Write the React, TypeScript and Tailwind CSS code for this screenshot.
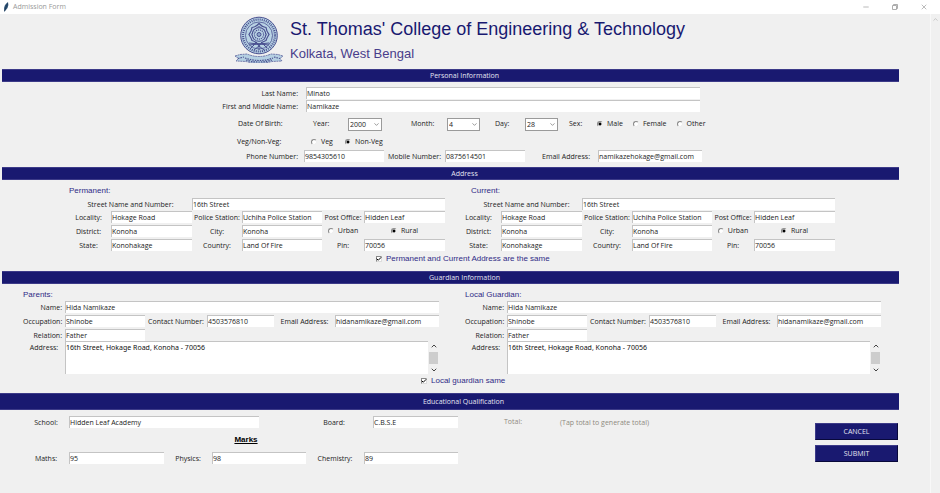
import { useId } from "react";
import type { ReactNode } from "react";
import { Check, ChevronDown, ChevronUp, Minus, X } from "lucide-react";

const FONT = "font-['Open_Sans','Noto_Sans',sans-serif]";
const ARIAL = "font-['Liberation_Sans',Arial,sans-serif]";

type FieldProps = {
  label: string;
  value: string;
  labelClass?: string;
  inputClass?: string;
};

function Field({ label, value, labelClass = "text-center", inputClass = "" }: FieldProps) {
  const id = useId();
  return (
    <>
      <label htmlFor={id} className={`h-3 min-w-0 leading-[14px] whitespace-nowrap ${labelClass}`}>
        {label}
      </label>
      <input
        id={id}
        defaultValue={value}
        className={`h-3 w-full min-w-0 border-t border-l border-[#c4c4c4] bg-white leading-3 outline-none ${inputClass}`}
      />
    </>
  );
}

function Picker({ label, value, options, labelClass }: { label: string; value: string; options: string[]; labelClass: string }) {
  const id = useId();
  return (
    <>
      <label htmlFor={id} className={labelClass}>
        {label}
      </label>
      <div className="relative">
        <select
          id={id}
          defaultValue={value}
          className="block h-[13px] w-full appearance-none border border-[#9a9a9a] bg-white pl-px leading-3 outline-none"
        >
          {options.map((o) => (
            <option key={o}>{o}</option>
          ))}
        </select>
        <ChevronDown className="pointer-events-none absolute top-[3px] right-0.5 size-[7px] text-[#555]" />
      </div>
    </>
  );
}

function Radio({ name, label, checked = false }: { name: string; label: string; checked?: boolean }) {
  return (
    <label className="flex items-center gap-1 whitespace-nowrap">
      <input
        type="radio"
        name={name}
        defaultChecked={checked}
        className="size-[6px] appearance-none rounded-full border border-t-[#888] border-r-[#eee] border-b-[#eee] border-l-[#888] bg-white checked:bg-[radial-gradient(circle,#000_1px,#fff_2px)]"
      />
      {label}
    </label>
  );
}

function SameCheck({ label }: { label: string }) {
  return (
    <label className={`flex items-center gap-1 text-[8px] whitespace-nowrap text-[#2f2b86] ${ARIAL}`}>
      <span className="relative size-[6px]">
        <input
          type="checkbox"
          defaultChecked
          className="peer block size-[6px] appearance-none border border-t-[#888] border-r-[#ddd] border-b-[#ddd] border-l-[#888] bg-white"
        />
        <Check strokeWidth={4} className="pointer-events-none absolute inset-0 hidden size-[6px] text-black peer-checked:block" />
      </span>
      {label}
    </label>
  );
}

function Bar({ children, className = "ml-0.5 h-[13px]" }: { children: ReactNode; className?: string }) {
  return (
    <h2 className={`flex items-center justify-center border-y border-[#3c3a88] bg-[#191970] pl-7 text-[#e4e4f0] ${className}`}>
      {children}
    </h2>
  );
}

function AddressBlock({ title, name, indent = "" }: { title: string; name: string; indent?: string }) {
  return (
    <div>
      <h3 className={`h-3.5 text-[8px] leading-[14px] text-[#2f2b86] ${ARIAL} ${indent}`}>{title}</h3>
      <div className="grid grid-cols-[123fr_253fr]">
        <Field label="Street Name and Number:" value="16th Street" labelClass={`text-center ${indent}`} />
      </div>
      <div className="mt-px grid grid-cols-[42fr_81fr_50fr_80fr_42fr_81fr] gap-y-0.5">
        <Field label="Locality:" value="Hokage Road" labelClass="text-center pr-[3px]" />
        <Field label="Police Station:" value="Uchiha Police Station" />
        <Field label="Post Office:" value="Hidden Leaf" />
        <Field label="District:" value="Konoha" labelClass="text-center pr-[3px]" />
        <Field label="City:" value="Konoha" />
        <div className="flex items-center justify-center">
          <Radio name={name} label="Urban" />
        </div>
        <div className="flex items-center justify-center">
          <Radio name={name} label="Rural" checked />
        </div>
        <Field label="State:" value="Konohakage" labelClass="text-center pr-[3px]" />
        <Field label="Country:" value="Land Of Fire" />
        <Field label="Pin:" value="70056" />
      </div>
    </div>
  );
}

function GuardianBlock({ title }: { title: string }) {
  const id = useId();
  return (
    <div>
      <h3 className={`h-[13px] text-[8px] leading-[14px] text-[#2f2b86] ${ARIAL}`}>{title}</h3>
      <div className="grid grid-cols-[42fr_80fr_62fr_67fr_61fr_104fr] gap-y-0.5">
        <Field label="Name:" value="Hida Namikaze" labelClass="text-right pr-[3px]" inputClass="col-span-5" />
        <Field label="Occupation:" value="Shinobe" labelClass="text-right pr-[3px]" />
        <Field label="Contact Number:" value="4503576810" />
        <Field label="Email Address:" value="hidanamikaze@gmail.com" />
        <Field label="Relation:" value="Father" labelClass="text-right pr-[3px]" />
      </div>
      <div className="grid grid-cols-[42fr_374fr]">
        <label htmlFor={id} className="pt-px text-center">
          Address:
        </label>
        <div className="flex h-[33px]">
          <textarea
            id={id}
            defaultValue="16th Street, Hokage Road, Konoha - 70056"
            className="min-w-0 flex-1 resize-none overflow-hidden border-t border-l border-[#c4c4c4] bg-white font-['Noto_Sans',sans-serif] leading-3 text-[#111] outline-none"
          />
          <div className="flex w-[11px] flex-col items-center justify-between pt-px">
            <ChevronUp strokeWidth={3} className="size-[8px] text-[#444]" />
            <div className="h-3 w-[9px] bg-[#cdcdcd]" />
            <ChevronDown strokeWidth={3} className="size-[8px] text-[#444]" />
          </div>
        </div>
      </div>
    </div>
  );
}

function Crest() {
  return (
    <svg viewBox="0 0 50 48" className="h-12 w-[50px]" fill="none" stroke="#4a5090" role="img" aria-label="College crest">
      <circle cx="25" cy="20.500" r="18.300" fill="#b5d0e2" strokeWidth="1" />
      <circle cx="25" cy="20.500" r="16" strokeWidth="2.200" strokeDasharray="1 1.100" />
      <circle cx="25" cy="20.500" r="13.500" fill="#b9d3e4" strokeWidth=".8" />
      <path d="M25 8.500q3 3.500 7 4 .5 4 3 7-2 3-3 6-4 1-7 5-3-4-7-5-1-3-3-6 2.500-3 3-7 4-.5 7-4z" strokeWidth="1.200" />
      <path d="M25 11q2.500 2.500 5.500 3.500.5 3 2 5-2 3-2 5M25 11q-2.500 2.500-5.500 3.500-.5 3-2 5 2 3 2 5" strokeWidth=".7" />
      <path d="M15 30l20-2M15 28l20 2M17 33l6-6M33 33l-6-6M20 35l5-4 5 4M25 28v7" strokeWidth="1" />
      <circle cx="25" cy="19.500" r="6.800" strokeWidth="1" />
      <circle cx="25" cy="19.500" r="4.600" strokeWidth="1.200" strokeDasharray="1.200 .8" />
      <circle cx="25" cy="19.500" r="2" fill="#8fa7cb" strokeWidth="1" />
      <path d="M1 41l5-1.500L13 39q12 5 24 0l7 .5 5 1.500-3 2.500 2 2.500-10 .5Q25 50 12 46.500L2 46l2.500-2.500z" fill="#b5d0e2" strokeWidth=".7" strokeDasharray="2 .6" />
      <path d="M4 43.500l6-1.500M11 43q14 5 28 0M12 45q13 4 26 0M40 42l6 1.500" strokeWidth="1.200" strokeDasharray="1.500 1" />
    </svg>
  );
}

export default function App() {
  return (
    <div className={`flex min-h-screen flex-col bg-[#f0f0f0] text-[7px] leading-3 text-[#222] ${FONT}`}>
      <header className="flex h-3.5 items-center bg-white pl-[3px] text-[#999]">
        <svg viewBox="0 0 6 10" className="h-2.5 w-1.5">
          <path d="M5 0Q6 3 4.500 6L2.500 8.500 1 10l.2-2Q.5 3 5 0z" fill="#2f5478" />
          <path d="M4.500 1.500L1.500 9" stroke="#172e48" strokeWidth=".6" />
        </svg>
        <h1 className="ml-1">Admission Form</h1>
        <div className="ml-auto flex items-center gap-[21px] pr-3">
          <button aria-label="Minimize">
            <Minus strokeWidth={2} className="size-2" />
          </button>
          <button aria-label="Restore">
            <svg viewBox="0 0 8 8" className="size-2" fill="none" stroke="currentColor">
              <path d="M1.500 2.500h4v4h-4zM2.500 2.500v-1h4v4h-1" strokeWidth=".8" />
            </svg>
          </button>
          <button aria-label="Close">
            <X strokeWidth={2} className="size-2" />
          </button>
        </div>
      </header>

      <div className="flex flex-1">
        <main className="min-w-0 flex-1">
          <div className="grid h-[55px] grid-cols-[234fr_56fr_609fr]">
            <div className="col-start-2 pt-px">
              <Crest />
            </div>
            <div className={`${ARIAL} whitespace-nowrap`}>
              <p className="pt-[3px] text-[18px] leading-6 text-[#191970]">St. Thomas' College of Engineering &amp; Technology</p>
              <p className="pt-[3px] text-[13px] leading-5 text-[#483d8b]">Kolkata, West Bengal</p>
            </div>
          </div>

          <Bar>Personal Information</Bar>
          <section className="pt-[5px] pb-1">
            <div className="grid grid-cols-[306fr_394fr_199fr]">
              <Field label="Last Name:" value="Minato" labelClass="text-right pr-2" />
            </div>
            <div className="mt-px grid grid-cols-[306fr_394fr_199fr]">
              <Field label="First and Middle Name:" value="Namikaze" labelClass="text-right pr-2" />
            </div>
            <div className="mt-px grid h-[22px] grid-cols-[238fr_75fr_35fr_34fr_29fr_36fr_33fr_15fr_30fr_33fr_11fr_28fr_302fr] items-center whitespace-nowrap">
              <span className="col-start-2">Date Of Birth:</span>
              <Picker label="Year:" value="2000" options={["1999", "2000", "2001"]} labelClass="" />
              <Picker label="Month:" value="4" options={["3", "4", "5"]} labelClass="col-start-6" />
              <Picker label="Day:" value="28" options={["27", "28", "29"]} labelClass="col-start-9" />
              <span className="col-start-12">Sex:</span>
              <div className="flex gap-2.5">
                <Radio name="sex" label="Male" checked />
                <Radio name="sex" label="Female" />
                <Radio name="sex" label="Other" />
              </div>
            </div>
            <div className="grid h-3.5 grid-cols-[237fr_74fr_588fr] items-center">
              <span className="col-start-2 whitespace-nowrap">Veg/Non-Veg:</span>
              <div className="flex gap-3">
                <Radio name="diet" label="Veg" />
                <Radio name="diet" label="Non-Veg" checked />
              </div>
            </div>
            <div className="grid h-3.5 grid-cols-[304fr_80fr_61fr_80fr_73fr_104fr_197fr] items-center">
              <Field label="Phone Number:" value="9854305610" labelClass="text-right pr-1.5" />
              <Field label="Mobile Number:" value="0875614501" />
              <Field label="Email Address:" value="namikazehokage@gmail.com" labelClass="text-right pr-2" />
            </div>
          </section>

          <Bar>Address</Bar>
          <section className="pt-1 pb-[5px]">
            <div className="grid grid-cols-[69fr_376fr_14fr_376fr_64fr]">
              <div className="col-start-2">
                <AddressBlock title="Permanent:" name="permanent" />
              </div>
              <div className="col-start-4">
                <AddressBlock title="Current:" name="current" indent="pl-3" />
              </div>
            </div>
            <div className="mt-px grid h-3.5 grid-cols-[376fr_523fr]">
              <div className="col-start-2 flex items-center">
                <SameCheck label="Permanent and Current Address are the same" />
              </div>
            </div>
          </section>

          <Bar>Guardian Information</Bar>
          <section className="pt-1 pb-[5px]">
            <div className="grid grid-cols-[23fr_416fr_26fr_416fr_18fr]">
              <div className="col-start-2">
                <GuardianBlock title="Parents:" />
              </div>
              <div className="col-start-4">
                <GuardianBlock title="Local Guardian:" />
              </div>
            </div>
            <div className="grid h-3.5 grid-cols-[421fr_478fr]">
              <div className="col-start-2 flex items-center">
                <SameCheck label="Local guardian same" />
              </div>
            </div>
          </section>

          <Bar className="h-[17px]">Educational Qualification</Bar>
          <section className="grid grid-cols-[815fr_84fr] pt-1.5">
            <div>
              <div className="grid grid-cols-[23fr_46fr_190fr_36fr_78fr_85fr_46fr_56fr_255fr]">
                <Field label="School:" value="Hidden Leaf Academy" labelClass="col-start-2 text-center" />
                <Field label="Board:" value="C.B.S.E" labelClass="col-start-5 text-center" />
                <button className="col-start-8 h-3 text-left text-[#8f8a80]">Total:</button>
                <output className="h-3 leading-[14px] whitespace-nowrap text-[#8f8a80]">(Tap total to generate total)</output>
              </div>
              <div className="grid h-6 grid-cols-[212fr_68fr_535fr]">
                <h3 className={`col-start-2 text-center text-[8px] leading-6 font-bold text-black underline ${ARIAL}`}>Marks</h3>
              </div>
              <div className="grid grid-cols-[23fr_46fr_95fr_48fr_94fr_58fr_94fr_357fr]">
                <Field label="Maths:" value="95" labelClass="col-start-2 text-center" />
                <Field label="Physics:" value="98" />
                <Field label="Chemistry:" value="89" />
              </div>
            </div>
            <div className="flex flex-col gap-[5px] pt-[7px] pr-px">
              <button className="h-[17px] border border-t-[#3c3a88] border-r-[#08083a] border-b-[#08083a] border-l-[#3c3a88] bg-[#191970] text-[#e4e4f0]">
                CANCEL
              </button>
              <button className="h-[17px] border border-t-[#3c3a88] border-r-[#08083a] border-b-[#08083a] border-l-[#3c3a88] bg-[#191970] text-[#e4e4f0]">
                SUBMIT
              </button>
            </div>
          </section>
        </main>
        <div className="w-[31px]" />
        <div className="flex w-2.5 justify-center border-l border-[#f8f8f8] pt-0.5">
          <ChevronUp className="size-[7px] text-[#aaa]" />
        </div>
      </div>
    </div>
  );
}
